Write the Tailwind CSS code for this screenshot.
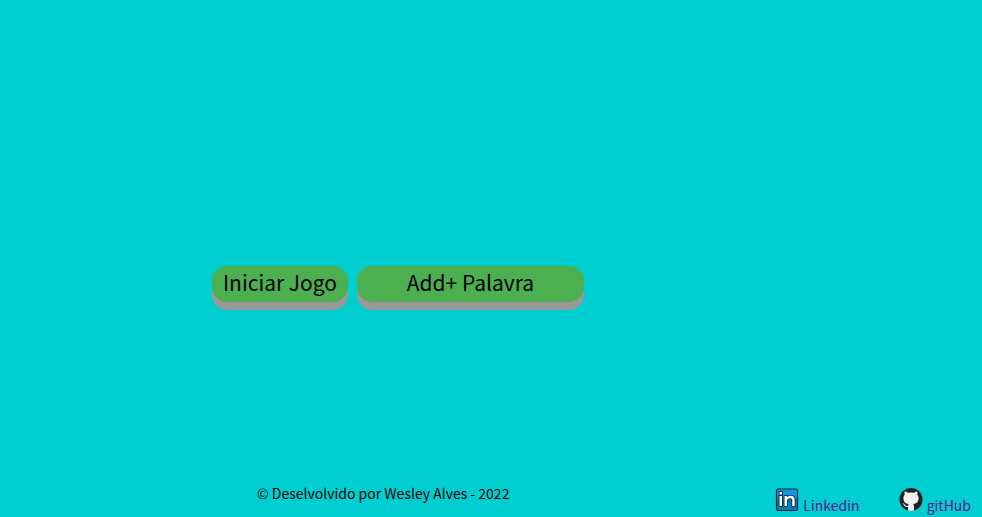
<!DOCTYPE html>
<html lang="pt-BR">
<head>
<meta charset="utf-8">
<meta name="viewport" content="width=device-width, initial-scale=1">
<title>Jogo da Forca</title>
<script src="https://cdn.jsdelivr.net/npm/@tailwindcss/browser@4"></script>
</head>
<body class="flex min-h-screen flex-col bg-[#00ced1] font-['Noto_Sans_CJK_JP','Roboto',sans-serif] text-black">
<main class="flex flex-1 items-start gap-[9px] pt-[266px] pl-[212px]">
  <button type="button" class="h-9 w-[136px] rounded-[15px] bg-[#4caf50] pb-1 text-[21px] leading-8 whitespace-nowrap shadow-[0_8px_#999]">Iniciar Jogo</button>
  <button type="button" class="h-9 w-[227px] rounded-[15px] bg-[#4caf50] pb-1 text-[21px] leading-8 whitespace-nowrap shadow-[0_8px_#999]">Add+ Palavra</button>
</main>
<footer class="flex items-start justify-between pr-[11px] pb-[3px] pl-[257px]">
  <p class="text-[14px] leading-[18px] whitespace-nowrap">© Deselvolvido por Wesley Alves - 2022</p>
  <nav class="flex gap-[39px] pt-1 text-[14px] leading-[18px] text-[#551a8b]">
    <a href="#linkedin" class="flex items-start gap-1">
      <svg class="size-6" viewBox="0 0 24 24" aria-hidden="true">
        <rect x="1.500" y="1" width="21" height="21.500" rx="1.500" fill="#0879bf" stroke="#06263b" stroke-width="1.200"/>
        <path d="M2.200 1.700h19.600v9H2.200z" fill="#1694df"/>
        <g fill="#fff" stroke="#06263b" stroke-width="1.600" paint-order="stroke">
          <rect x="4.500" y="4" width="2.500" height="2.500"/>
          <rect x="4.500" y="8" width="2.500" height="10"/>
          <path d="M9.500 8H12v1.200c1-1 2-1.500 3.700-1.500 2.700 0 4 1.600 4 4.300v6h-2.500v-5.500c0-1.500-.6-2.300-2.200-2.300-1.900 0-3 1-3 2.500V18H9.500z"/>
        </g>
      </svg>
      <span class="pt-2">Linkedin</span>
    </a>
    <a href="#github" class="flex items-start gap-1">
      <svg class="size-6" viewBox="0 0 24 24" aria-hidden="true">
        <circle cx="12" cy="11.500" r="11.500" fill="#211f1f"/>
        <path d="M9 22.600V19c-2.800.5-3.500-1-4.200-2.200-.4-.7-1-1.100-1.300-1.400 1.300-.3 2.100.8 2.700 1.700.7 1 1.600 1 2.800.6.1-.7.4-1.200.8-1.600-3.200-.5-5.400-2-5.400-5.800 0-1.500.5-2.700 1.300-3.600-.3-1-.3-2.200.1-3.300 1.200 0 2.400.7 3.400 1.400a11 11 0 0 1 5.600 0c1-.7 2.200-1.400 3.400-1.400.4 1.100.4 2.300.1 3.300.9.9 1.300 2.100 1.300 3.600 0 3.800-2.200 5.300-5.400 5.800.6.600.8 1.300.8 2.300v4.200a12 12 0 0 1-6 0z" fill="#f3f3f3"/>
      </svg>
      <span class="pt-2">gitHub</span>
    </a>
  </nav>
</footer>
</body>
</html>
